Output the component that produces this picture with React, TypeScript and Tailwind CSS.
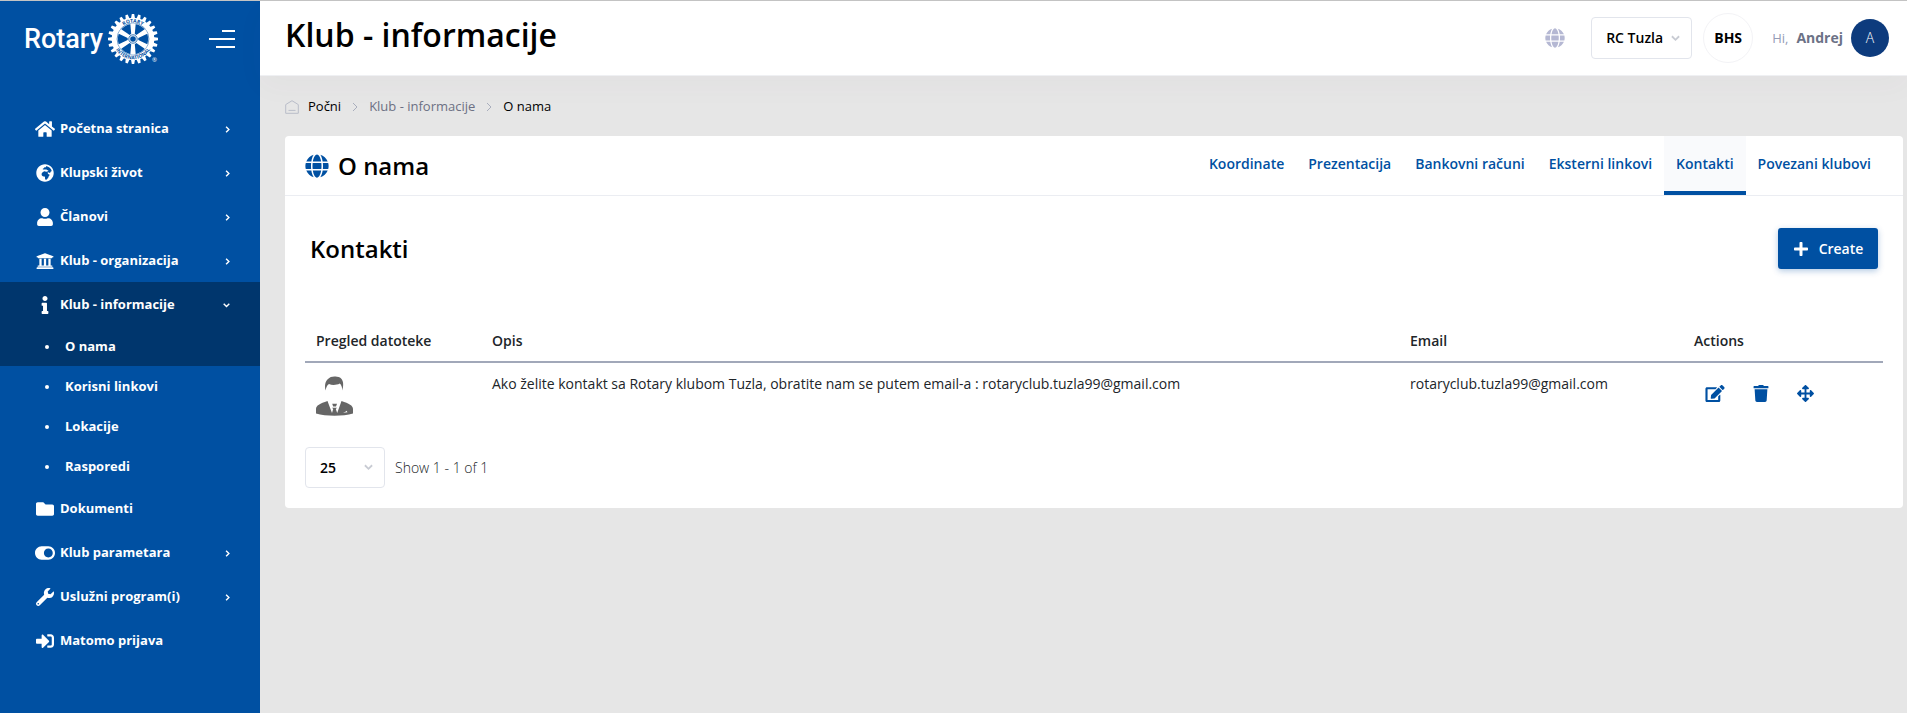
import React from "react";
import {
  FaArrowsAlt,
  FaEdit,
  FaFolder,
  FaGlobe,
  FaGlobeAfrica,
  FaHome,
  FaInfo,
  FaPlus,
  FaSignInAlt,
  FaToggleOn,
  FaTrash,
  FaUniversity,
  FaUser,
  FaWrench,
} from "react-icons/fa";
import type { IconType } from "react-icons";

const teeth = Array.from({ length: 24 }, (_, i) => i * 15);
const spokes = Array.from({ length: 6 }, (_, i) => i * 60);

function RotaryWheel() {
  return (
    <svg viewBox="-25 -25 50 50" className="size-[50px]" aria-hidden="true">
      <defs>
        <path id="rim-top" d="M-16.4 0A16.4 16.4 0 0 1 16.4 0" />
        <path id="rim-bottom" d="M-20.2 0A20.2 20.2 0 0 0 20.2 0" />
      </defs>
      <g fill="#fff">
        {teeth.map((a) => (
          <path key={a} transform={`rotate(${a})`} d="M-2.1-20L-1.2-25H1.2L2.1-20Z" />
        ))}
      </g>
      <circle r="18.2" fill="none" stroke="#fff" strokeWidth="6.2" />
      <circle r="15.9" fill="none" stroke="#0050a2" strokeWidth="0.6" />
      <g fill="#fff">
        {spokes.map((a) => (
          <path key={a} transform={`rotate(${a})`} d="M-1.7-4L-2.7-15.5H2.7L1.7-4Z" />
        ))}
        <circle r="5.4" />
      </g>
      <circle r="4.2" fill="none" stroke="#0050a2" strokeWidth="0.8" />
      <circle r="2.8" fill="#0050a2" />
      <g fill="#0050a2" className="font-bold" fontSize="5" fontFamily="Open Sans, sans-serif" textAnchor="middle">
        <text>
          <textPath href="#rim-top" startOffset="50%">ROTARY</textPath>
        </text>
        <text>
          <textPath href="#rim-bottom" startOffset="50%">INTERNATIONAL</textPath>
        </text>
      </g>
    </svg>
  );
}

function ChevronRight({ className }: { className: string }) {
  return (
    <svg viewBox="0 0 6 10" fill="none" stroke="currentColor" className={className} aria-hidden="true">
      <path d="M1 1L5 5L1 9" />
    </svg>
  );
}

function ChevronDown({ className }: { className: string }) {
  return (
    <svg viewBox="0 0 10 7" fill="none" stroke="currentColor" className={className} aria-hidden="true">
      <path d="M1 1L5 5L9 1" />
    </svg>
  );
}

type Item = { label: string; icon: IconType; arrow?: boolean; children?: string[] };

const menu: Item[] = [
  { label: "Početna stranica", icon: FaHome, arrow: true },
  { label: "Klupski život", icon: FaGlobeAfrica, arrow: true },
  { label: "Članovi", icon: FaUser, arrow: true },
  { label: "Klub - organizacija", icon: FaUniversity, arrow: true },
  {
    label: "Klub - informacije",
    icon: FaInfo,
    arrow: true,
    children: ["O nama", "Korisni linkovi", "Lokacije", "Rasporedi"],
  },
  { label: "Dokumenti", icon: FaFolder },
  { label: "Klub parametara", icon: FaToggleOn, arrow: true },
  { label: "Uslužni program(i)", icon: FaWrench, arrow: true },
  { label: "Matomo prijava", icon: FaSignInAlt },
];

function MenuEntry({ item }: { item: Item }) {
  const Icon = item.icon;
  const open = Boolean(item.children);
  return (
    <li>
      <a href="#" className={`flex h-11 items-center px-[30px] pt-0.5 ${open ? "bg-[#00366d]" : ""}`}>
        <span className="flex w-[30px] justify-center">
          <Icon className="h-[18px] w-5 shrink-0" />
        </span>
        <span className="flex-1">{item.label}</span>
        {item.arrow &&
          (open ? (
            <ChevronDown className="h-[5px] w-[7px] stroke-2" />
          ) : (
            <ChevronRight className="h-[7px] w-[5px] stroke-2" />
          ))}
      </a>
      {item.children && (
        <ul>
          {item.children.map((label, i) => (
            <li key={label}>
              <a href="#" className={`flex h-10 items-center pt-0.5 pl-[45px] ${i === 0 ? "bg-[#00366d]" : ""}`}>
                <span className="mr-4 size-1 rounded-full bg-white" />
                {label}
              </a>
            </li>
          ))}
        </ul>
      )}
    </li>
  );
}

function Sidebar() {
  return (
    <aside className="w-[260px] shrink-0 bg-[#0050a2] text-white">
      <div className="flex h-[75px] items-center justify-between pr-[25px] pl-6">
        <a href="#" className="flex items-center gap-[5px]" aria-label="Rotary">
          <span className="font-[Roboto,sans-serif] text-[27px] leading-9 font-medium">Rotary</span>
          <span className="flex items-end">
            <RotaryWheel />
            <span className="-ml-1.5 text-[6px] leading-[8px]">®</span>
          </span>
        </a>
        <button type="button" aria-label="Toggle menu" className="flex flex-col items-end gap-1.5">
          <span className="h-0.5 w-[13px] bg-white" />
          <span className="h-0.5 w-[26px] bg-white" />
          <span className="h-0.5 w-[19px] bg-white" />
        </button>
      </div>
      <nav className="pt-[30px] text-[13px] font-bold">
        <ul>
          {menu.map((item) => (
            <MenuEntry key={item.label} item={item} />
          ))}
        </ul>
      </nav>
    </aside>
  );
}

function Header() {
  return (
    <header className="relative flex h-[75px] items-center justify-between border-b border-[#eff0f3] bg-white pr-[18px] pl-[25px] shadow-[0_10px_30px_0_rgba(82,63,105,0.03)]">
      <h1 className="pb-1.5 text-[32px] leading-9 font-semibold">Klub - informacije</h1>
      <div className="flex items-center text-sm">
        <button type="button" aria-label="Language" className="mr-[26px] text-[#b5b8d3]">
          <FaGlobe className="size-5" />
        </button>
        <div className="relative mr-[11px] flex items-center">
          <select
            aria-label="Klub"
            className="w-[101px] appearance-none rounded border border-[#e2e5ec] bg-white py-2.5 pl-3.5 leading-5 font-semibold"
          >
            <option>RC Tuzla</option>
          </select>
          <ChevronDown className="pointer-events-none absolute right-3 h-[7px] w-[9px] stroke-2 text-[#c8cbd3]" />
        </div>
        <button type="button" className="mr-[19px] size-[50px] rounded-full border border-[#f3f3f6] font-bold">
          BHS
        </button>
        <a href="#" className="flex items-center">
          <span className="mr-2 text-[13px] text-[#959cb6]">Hi,</span>
          <span className="mr-2 font-bold text-[#6c7286]">Andrej</span>
          <span className="flex size-[38px] items-center justify-center rounded-full bg-[#0d3b7d] font-light text-white">
            A
          </span>
        </a>
      </div>
    </header>
  );
}

function Breadcrumb() {
  return (
    <nav aria-label="Breadcrumb" className="flex h-[60px] items-center pt-0.5 text-[13px] font-medium">
      <svg viewBox="0 0 14 14" className="mr-[9px] size-3.5 text-[#b9bdc9]" fill="none" stroke="currentColor" aria-hidden="true">
        <path d="M.7 4.6L7 .7l6.3 3.9v8.7H.7ZM3.5 10.4h7" />
      </svg>
      <a href="#">Počni</a>
      <ChevronRight className="mx-[11px] h-2.5 w-1.5 text-[#a9aebd]" />
      <a href="#" className="text-[#6c7083]">
        Klub - informacije
      </a>
      <ChevronRight className="mx-[11px] h-2.5 w-1.5 text-[#a9aebd]" />
      <a href="#">O nama</a>
    </nav>
  );
}

const tabs = ["Koordinate", "Prezentacija", "Bankovni računi", "Eksterni linkovi", "Kontakti", "Povezani klubovi"];

function PersonPicture() {
  return (
    <svg viewBox="0 0 37 40" className="h-10 w-[37px]" fill="#666" role="img" aria-label="Kontakt">
      <path d="M9.600 14.500C8.500 10 9 5.500 12 3C14 .600 18 0 21 .800C25.500 1 28 5 27 11L26.300 14.500C26.200 11.500 25.500 9 23.800 7.500C20.500 9.200 16 9.500 13 8C11 9 10.200 11.500 9.600 14.500Z" />
      <path d="M0 37.500V33C0 29.500 4 27.500 11.500 25L16 37L17.200 33L16 31.800H21L19.800 33L21.200 37L25.500 25C33 27.500 37 29.500 37 33V37.500C27 40.500 10 40.500 0 37.500Z" />
      <path d="M16.200 27.800H21L20 30.500H17.200Z" />
      <path d="M27 36.800L29.500 35.800L30.500 34.800L31.500 36.300Z" fill="#fff" />
    </svg>
  );
}

function Card() {
  return (
    <section className="rounded bg-white">
      <div className="flex h-[60px] justify-between border-b border-[#ebedf2] px-5">
        <h2 className="flex items-center gap-[9px] text-2xl font-semibold">
          <FaGlobe className="size-6 text-[#0050a2]" />
          O nama
        </h2>
        <nav className="flex text-sm font-semibold text-[#0050a2]">
          {tabs.map((tab) => (
            <a
              key={tab}
              href="#"
              className={`flex items-center border-b-4 px-3 ${
                tab === "Kontakti" ? "border-[#0050a2] bg-[#f9fafc]" : "border-transparent"
              }`}
            >
              {tab}
            </a>
          ))}
        </nav>
      </div>
      <div className="px-5 pt-8 pb-5">
        <div className="flex items-center justify-between px-[5px]">
          <h3 className="text-2xl font-semibold">Kontakti</h3>
          <button
            type="button"
            className="flex h-[41px] w-[100px] items-center justify-center gap-2.5 rounded-[3px] bg-[#0050a2] text-sm font-semibold text-white shadow-[0_2px_6px_0_rgba(0,80,162,0.3)]"
          >
            <FaPlus className="size-4" />
            Create
          </button>
        </div>
        <table className="mt-[51px] w-full table-fixed text-left text-sm text-[#212529]">
          <colgroup>
            <col className="w-[176px]" />
            <col />
            <col className="w-[284px]" />
            <col className="w-[200px]" />
          </colgroup>
          <thead>
            <tr className="h-[42px] border-b-2 border-[#a1a8b9]">
              <th className="px-[11px] font-semibold">Pregled datoteke</th>
              <th className="px-[11px] font-semibold">Opis</th>
              <th className="px-[11px] font-semibold">Email</th>
              <th className="px-[11px] font-semibold">Actions</th>
            </tr>
          </thead>
          <tbody>
            <tr className="align-top">
              <td className="px-[11px] pt-[13px] pb-[23px]">
                <PersonPicture />
              </td>
              <td className="px-[11px] pt-[11px]">
                Ako želite kontakt sa Rotary klubom Tuzla, obratite nam se putem email-a : rotaryclub.tuzla99@gmail.com
              </td>
              <td className="px-[11px] pt-[11px]">rotaryclub.tuzla99@gmail.com</td>
              <td className="px-[11px] pt-[22px]">
                <div className="flex items-center gap-7 pl-[11px] text-[#0050a2]">
                  <button type="button" aria-label="Edit">
                    <FaEdit className="h-[17px] w-5" />
                  </button>
                  <button type="button" aria-label="Delete">
                    <FaTrash className="h-[17px] w-4" />
                  </button>
                  <button type="button" aria-label="Move">
                    <FaArrowsAlt className="size-[17px]" />
                  </button>
                </div>
              </td>
            </tr>
          </tbody>
        </table>
        <div className="mt-2 flex items-center gap-2.5 text-sm">
          <div className="relative flex items-center">
            <select
              aria-label="Page size"
              className="h-[41px] w-20 appearance-none rounded border border-[#e2e5ec] bg-white pl-3.5 leading-5 font-semibold"
            >
              <option>25</option>
            </select>
            <ChevronDown className="pointer-events-none absolute right-3 h-[7px] w-[9px] stroke-2 text-[#c8cbd3]" />
          </div>
          <span className="font-light text-[#212529]">Show 1 - 1 of 1</span>
        </div>
      </div>
    </section>
  );
}

export default function App() {
  return (
    <div className="flex min-h-screen border-t border-[#c4c4c4] bg-[#e6e6e6] font-['Open_Sans','Noto_Sans',sans-serif] text-black">
      <Sidebar />
      <div className="min-w-0 flex-1">
        <Header />
        <main className="pr-1 pl-[25px]">
          <Breadcrumb />
          <Card />
        </main>
      </div>
    </div>
  );
}
